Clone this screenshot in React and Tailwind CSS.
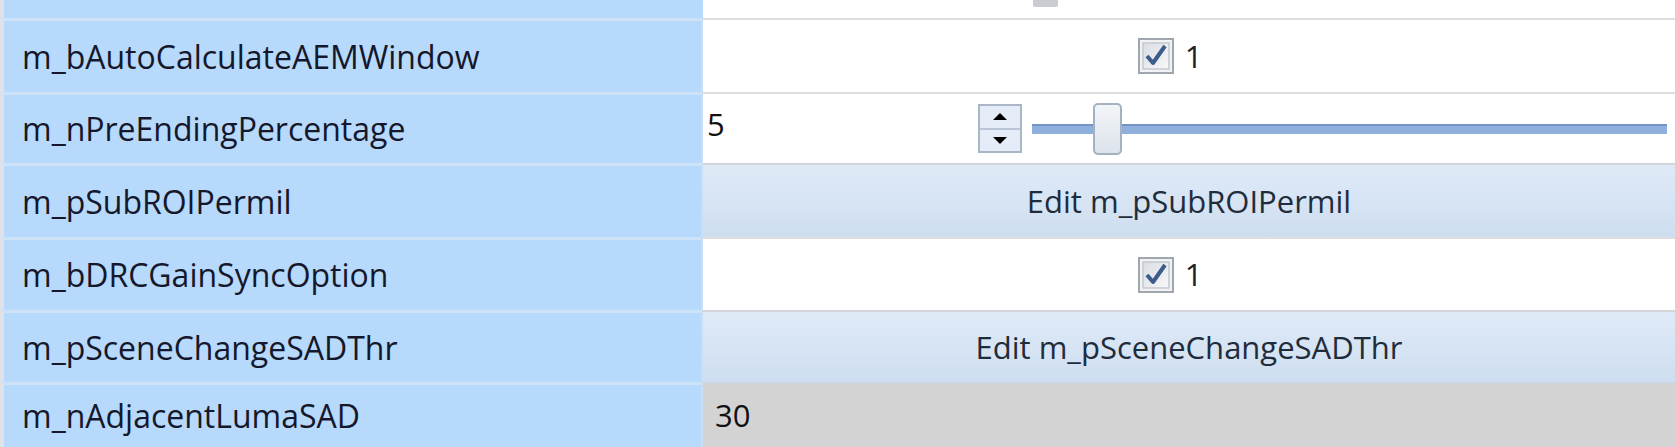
import React from "react";

const rows = [
  { name: "m_bAutoCalculateAEMWindow", kind: "check", h: "h-[74px]" },
  { name: "m_nPreEndingPercentage", kind: "slider", h: "h-[71px]" },
  { name: "m_pSubROIPermil", kind: "edit", h: "h-[74px]" },
  { name: "m_bDRCGainSyncOption", kind: "check", h: "h-[73px]" },
  { name: "m_pSceneChangeSADThr", kind: "edit", h: "h-[72px]" },
  { name: "m_nAdjacentLumaSAD", kind: "readonly", h: "h-[65px]" },
];

function CheckBox() {
  return (
    <svg width="36" height="36" viewBox="0 0 36 36">
      <defs>
        <linearGradient id="cbg" x1="0" y1="0" x2="1" y2="1">
          <stop offset="0" stopColor="#d9dde2" />
          <stop offset="1" stopColor="#f7f8f9" />
        </linearGradient>
      </defs>
      <rect x="1" y="1" width="34" height="34" fill="#f1f2f4" stroke="#a0a6ae" strokeWidth="2" />
      <rect x="5" y="5" width="26" height="26" fill="url(#cbg)" stroke="#c4c9cf" strokeWidth="1.5" />
      <path d="M9 18 L15 25 L27 8" fill="none" stroke="#3d5c8c" strokeWidth="4" strokeLinejoin="round" />
    </svg>
  );
}

function Spinner() {
  return (
    <div className="flex flex-col w-[44px] h-[49px] border-2 border-[#aab7c9] bg-[#e4ecf7]">
      <div className="flex-1 flex items-center justify-center border-b-2 border-[#b9c6d8]">
        <div className="w-0 h-0 border-l-[7px] border-r-[7px] border-b-[7px] border-l-transparent border-r-transparent border-b-black" />
      </div>
      <div className="flex-1 flex items-center justify-center">
        <div className="w-0 h-0 border-l-[7px] border-r-[7px] border-t-[7px] border-l-transparent border-r-transparent border-t-black" />
      </div>
    </div>
  );
}

function Value({ kind, name }) {
  if (kind === "check") {
    return (
      <div className="h-full flex items-center justify-center gap-[11px] bg-white border-t-2 border-[#dedede] pr-[38px]">
        <CheckBox />
        <span className="text-[31px] text-[#222]">1</span>
      </div>
    );
  }
  if (kind === "slider") {
    return (
      <div className="h-full flex items-center bg-white border-t-2 border-[#dedede]">
        <span className="w-[275px] pl-[4px] text-[31px] text-[#111] -mt-[8px]">5</span>
        <Spinner />
        <div className="relative flex-1 ml-[10px] mr-[8px] h-[52px] flex items-center">
          <div className="w-full h-[10px] bg-[#8fb0dd] border-t-2 border-[#7394c4]" />
          <div className="absolute left-[61px] top-0 w-[29px] h-[52px] rounded-[5px] border-2 border-[#a5b1c1] bg-gradient-to-b from-[#f2f5f8] to-[#dde3eb]" />
        </div>
      </div>
    );
  }
  if (kind === "edit") {
    return (
      <div className="h-full flex items-center justify-center bg-gradient-to-b from-[#dfeaf7] to-[#cedef0] border-t-2 border-[#d2d6db]">
        <span className="text-[31px] text-[#1f2c3c]">Edit {name}</span>
      </div>
    );
  }
  return (
    <div className="h-full flex items-center bg-[#d3d3d3] border-t-2 border-[#cdd6df] pl-[12px]">
      <span className="text-[31px] text-[#111]">30</span>
    </div>
  );
}

export default function App() {
  return (
    <div
      className="w-[1675px] h-[447px] overflow-hidden bg-white"
      style={{ fontFamily: '"Open Sans", "Noto Sans", sans-serif' }}
    >
      <div className="grid grid-cols-[703px_1fr] h-[18px]">
        <div className="border-l-4 border-[#dfe3e8] bg-[#b6d9fc]" />
        <div className="relative bg-white">
          <div className="absolute left-[330px] top-0 w-[25px] h-[7px] rounded-b-[2px] bg-[#c9ccd1]" />
        </div>
      </div>
      {rows.map((r) => (
        <div key={r.name} className={`grid grid-cols-[703px_1fr] ${r.h}`}>
          <div className="h-full flex items-center border-l-4 border-l-[#dfe3e8] border-t-[3px] border-t-[#cde2f6] border-r-2 border-r-[#c9def3] bg-[#b6d9fc] pl-[18px]">
            <span className="text-[32px] text-[#15172a]">{r.name}</span>
          </div>
          <Value kind={r.kind} name={r.name} />
        </div>
      ))}
    </div>
  );
}
